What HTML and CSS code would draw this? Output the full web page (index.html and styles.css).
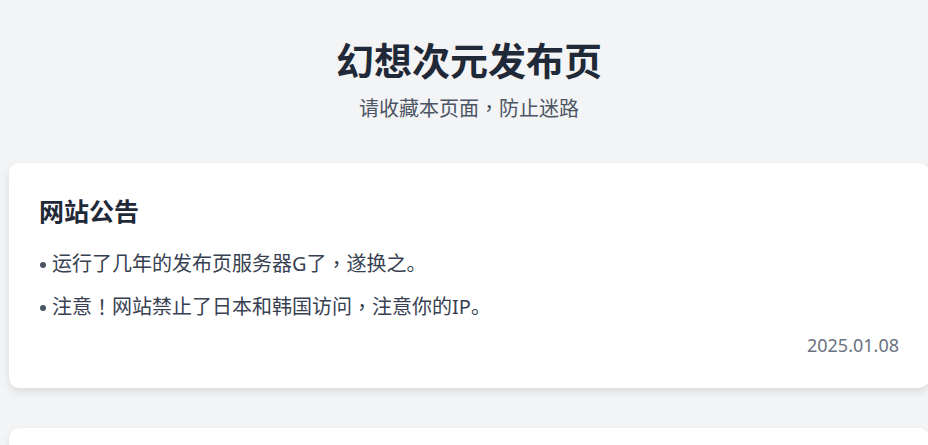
FILE: index.html
```html
<!DOCTYPE html>
<html lang="zh-CN">
  <head>
    <meta charset="UTF-8" />
    <meta name="viewport" content="width=device-width, initial-scale=1.0" />
    <title>幻想次元发布页</title>
    <link rel="stylesheet" href="styles.css">
  </head>
  <body>
    <div class="container">
      <!-- header -->
      <header class="header">
        <h1 class="header-title">幻想次元发布页</h1>
        <p class="header-sub">请收藏本页面<span class="punct" lang="zh-TW">，</span>防止迷路</p>
      </header>

      <!-- notice -->
      <section class="card">
        <h2 class="card-title">网站公告</h2>
        <ul class="notice-list">
          <li class="notice-item">运行了几年的发布页服务器G了<span class="punct" lang="zh-TW">，</span>遂换之。</li>
          <li class="notice-item">注意<span class="punct" lang="zh-TW">！</span>网站禁止了日本和韩国访问<span class="punct" lang="zh-TW">，</span>注意你的IP。</li>
        </ul>
        <p class="card-date">2025.01.08</p>
      </section>

      <section class="card card-next"></section>
    </div>
  </body>
</html>
```

FILE: styles.css
```css
/*global*/
* {
  margin: 0;
  padding: 0;
  box-sizing: border-box;
}

body {
  background-color: #f3f4f6;
  font-family: "Noto Sans", "Noto Sans CJK SC", sans-serif;
  color: #374151;
  overflow: hidden;
}

/* 全角标点居中 */
.punct {
  font-family: "Noto Sans CJK TC", sans-serif;
}

/*layout*/
.container {
  width: 920px;
  margin-left: 9px;
  padding-top: 34px;
}

/*header*/
.header {
  text-align: center;
  margin-bottom: 40px;
}

.header-title {
  font-size: 38px;
  line-height: 52px;
  font-weight: bold;
  color: #1f2937;
}

.header-sub {
  margin-top: 8px;
  font-size: 20px;
  line-height: 28px;
  color: #4b5563;
}

/*card*/
.card {
  background-color: #fff;
  border-radius: 10px;
  box-shadow: 0 4px 8px rgba(0, 0, 0, 0.1);
  padding: 30px 30px 30px;
  margin-bottom: 40px;
}

.card-title {
  font-size: 25px;
  line-height: 36px;
  font-weight: bold;
  color: #1f2937;
  margin-bottom: 21px;
}

.notice-list {
  list-style: none;
}

.notice-item {
  display: flex;
  align-items: center;
  font-size: 20px;
  line-height: 28px;
  margin-bottom: 15px;
  color: #374151;
}

.notice-item::before {
  content: "";
  width: 6px;
  height: 6px;
  border-radius: 50%;
  background-color: #4b5563;
  margin: 2px 6px 0 1px;
  flex-shrink: 0;
}

.card-date {
  text-align: right;
  font-size: 18px;
  line-height: 26px;
  color: #6b7280;
  margin-top: -4px;
}

.card-next {
  height: 100px;
}
```
